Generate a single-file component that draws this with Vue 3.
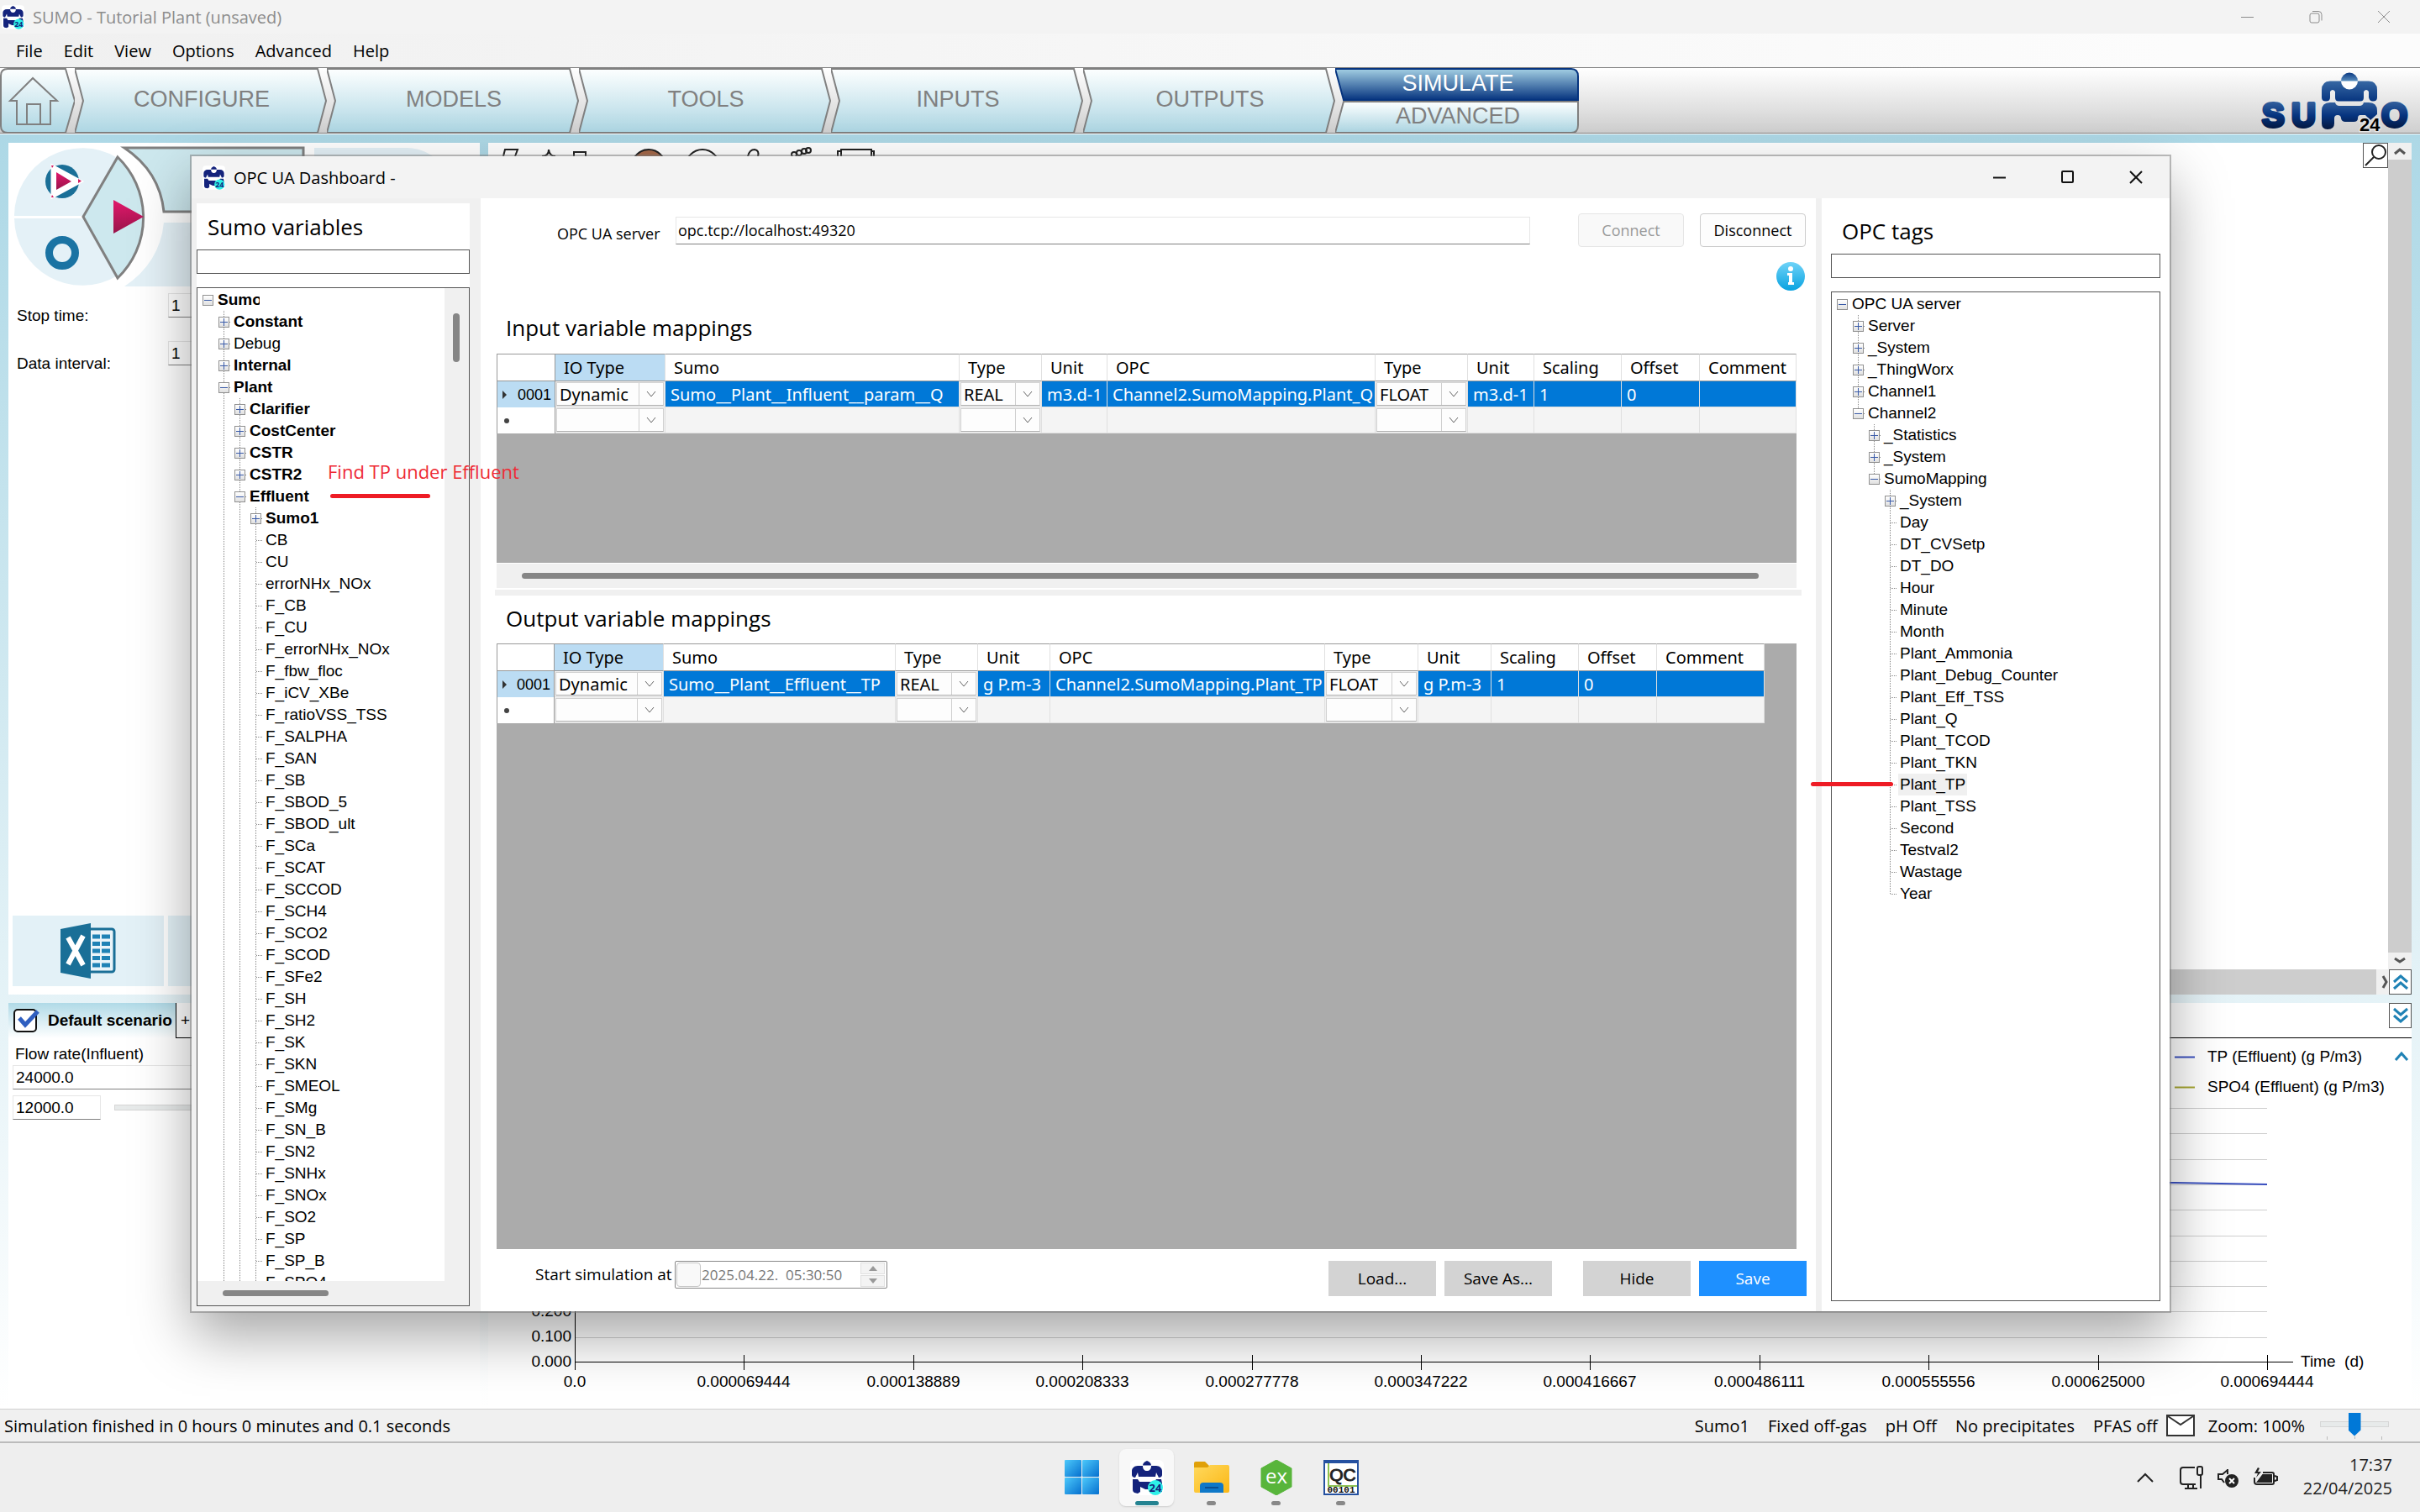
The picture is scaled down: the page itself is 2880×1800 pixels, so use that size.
<script setup>
const menu = ['File', 'Edit', 'View', 'Options', 'Advanced', 'Help']
const steps = ['CONFIGURE', 'MODELS', 'TOOLS', 'INPUTS', 'OUTPUTS']

// level, label, expander, bold
const sumoNodes = [
  [0, 'Sumo', '-', true],
  [1, 'Constant', '+', true],
  [1, 'Debug', '+', false],
  [1, 'Internal', '+', true],
  [1, 'Plant', '-', true],
  [2, 'Clarifier', '+', true],
  [2, 'CostCenter', '+', true],
  [2, 'CSTR', '+', true],
  [2, 'CSTR2', '+', true],
  [2, 'Effluent', '-', true],
  [3, 'Sumo1', '+', true],
  ...[
    'CB', 'CU', 'errorNHx_NOx', 'F_CB', 'F_CU', 'F_errorNHx_NOx', 'F_fbw_floc', 'F_iCV_XBe',
    'F_ratioVSS_TSS', 'F_SALPHA', 'F_SAN', 'F_SB', 'F_SBOD_5', 'F_SBOD_ult', 'F_SCa', 'F_SCAT',
    'F_SCCOD', 'F_SCH4', 'F_SCO2', 'F_SCOD', 'F_SFe2', 'F_SH', 'F_SH2', 'F_SK', 'F_SKN',
    'F_SMEOL', 'F_SMg', 'F_SN_B', 'F_SN2', 'F_SNHx', 'F_SNOx', 'F_SO2', 'F_SP', 'F_SP_B', 'F_SPO4',
  ].map((label) => [3, label, '', false]),
]
const opcNodes = [
  [0, 'OPC UA server', '-'],
  [1, 'Server', '+'],
  [1, '_System', '+'],
  [1, '_ThingWorx', '+'],
  [1, 'Channel1', '+'],
  [1, 'Channel2', '-'],
  [2, '_Statistics', '+'],
  [2, '_System', '+'],
  [2, 'SumoMapping', '-'],
  [3, '_System', '+'],
  ...[
    'Day', 'DT_CVSetp', 'DT_DO', 'Hour', 'Minute', 'Month', 'Plant_Ammonia', 'Plant_Debug_Counter',
    'Plant_Eff_TSS', 'Plant_Q', 'Plant_TCOD', 'Plant_TKN', 'Plant_TP', 'Plant_TSS', 'Second',
    'Testval2', 'Wastage', 'Year',
  ].map((label) => [3, label, '']),
]

// Works out which guide lines run through each row of a tree.
function buildRows(nodes, openEnded) {
  const continues = (index, level) => {
    for (let i = index + 1; i < nodes.length; i++) {
      if (nodes[i][0] === level) return true
      if (nodes[i][0] < level) return false
    }
    return openEnded
  }
  return nodes.map(([level, label, expander, bold], index) => {
    const guides = []
    for (let l = 0; l < level; l++) guides.push(l > 0 && continues(index, l))
    return { level, label, expander, bold: !!bold, guides, last: !continues(index, level) }
  })
}
const sumoRows = buildRows(sumoNodes, true)
const opcRows = buildRows(opcNodes, false)

const heads = ['IO Type', 'Sumo', 'Type', 'Unit', 'OPC', 'Type', 'Unit', 'Scaling', 'Offset', 'Comment']
const isCombo = (c) => c === 0 || c === 2 || c === 5
const grids = {
  input: {
    widths: [70, 131, 350, 98, 78, 319, 110, 79, 104, 93, 115],
    row: ['Dynamic', 'Sumo__Plant__Influent__param__Q', 'REAL', 'm3.d-1', 'Channel2.SumoMapping.Plant_Q', 'FLOAT', 'm3.d-1', '1', '0', ''],
  },
  output: {
    widths: [69, 130, 276, 98, 86, 327, 111, 87, 104, 93, 128],
    row: ['Dynamic', 'Sumo__Plant__Effluent__TP', 'REAL', 'g P.m-3', 'Channel2.SumoMapping.Plant_TP', 'FLOAT', 'g P.m-3', '1', '0', ''],
  },
}
const total = (list) => list.reduce((a, b) => a + b, 0)

const xLabels = ['0.0', '0.000069444', '0.000138889', '0.000208333', '0.000277778', '0.000347222', '0.000416667', '0.000486111', '0.000555556', '0.000625000', '0.000694444']
const tickX = (i) => Math.round(103 + i * 201.4)
const lineY = (i) => Math.round(386 - i * 30.3)
const status = ['Sumo1', 'Fixed off-gas', 'pH Off', 'No precipitates', 'PFAS off']
</script>

<template>
  <div class="desktop">
    <svg class="defs" aria-hidden="true">
      <defs>
        <linearGradient id="ice" x1="0" y1="0" x2="0" y2="1">
          <stop offset="0" stop-color="#fdffff" />
          <stop offset="1" stop-color="#add6e3" />
        </linearGradient>
        <linearGradient id="deep" x1="0" y1="0" x2="0" y2="1">
          <stop offset="0" stop-color="#a3cfe3" />
          <stop offset="1" stop-color="#06347f" />
        </linearGradient>
        <linearGradient id="torso" gradientUnits="userSpaceOnUse" x1="0" y1="10" x2="0" y2="36">
          <stop offset="0" stop-color="#3a6ba6" />
          <stop offset="1" stop-color="#06347f" />
        </linearGradient>
        <linearGradient id="head" gradientUnits="userSpaceOnUse" x1="0" y1="1" x2="0" y2="12">
          <stop offset="0" stop-color="#06347f" />
          <stop offset="1" stop-color="#5d92c0" />
        </linearGradient>
        <linearGradient id="letters" gradientUnits="userSpaceOnUse" x1="0" y1="36" x2="0" y2="69">
          <stop offset="0" stop-color="#33609d" />
          <stop offset="0.5" stop-color="#06347f" />
          <stop offset="1" stop-color="#03163d" />
        </linearGradient>
        <linearGradient id="pink" x1="0" y1="0" x2="0" y2="1">
          <stop offset="0" stop-color="#e2186b" />
          <stop offset="1" stop-color="#98144a" />
        </linearGradient>
        <linearGradient id="info" x1="0" y1="0" x2="0" y2="1">
          <stop offset="0" stop-color="#6fd3f8" />
          <stop offset="1" stop-color="#08a2e0" />
        </linearGradient>
        <linearGradient id="win" x1="0" y1="0" x2="1" y2="1">
          <stop offset="0" stop-color="#4cc9fb" />
          <stop offset="1" stop-color="#0670cf" />
        </linearGradient>
        <linearGradient id="folder" x1="0" y1="0" x2="1" y2="1">
          <stop offset="0" stop-color="#ffd95e" />
          <stop offset="1" stop-color="#fbb714" />
        </linearGradient>
        <symbol id="sumo-app" viewBox="0 0 40 42">
          <rect width="40" height="42" rx="6" fill="#fff" />
          <path d="M20 1c3 1 5 3 5 5.500h-10c0-2.500 2-4.500 5-5.500z" fill="#14237c" />
          <path d="M9 7h6c0 4 2 6 5 6s5-2 5-6h6c4 0 7 3 7 6v5c0 2-2 3-4 3l-3-6-1 5H10l-1-5-3 6c-2 0-4-1-4-3v-5c0-3 3-6 7-6z" fill="#14237c" />
          <path d="M3 23h6l2 3h18l2-3h6l1 5v10l-8 2V31l-4 4h-8l-6-3v6l-3 2-4-1c-2-1-2-3-2-5z" fill="#14237c" />
          <circle cx="30" cy="33" r="9" fill="#2df0e8" />
          <text x="30" y="38" text-anchor="middle" font-size="13" font-weight="700" font-family="Open Sans, sans-serif" fill="#14237c">24</text>
        </symbol>
      </defs>
    </svg>

    <header class="titlebar">
      <svg class="app-icon"><use href="#sumo-app" /></svg>
      <span class="title">SUMO - Tutorial Plant (unsaved)</span>
      <div class="win-buttons muted">
        <button aria-label="Minimize"><svg width="16" height="16"><path d="M0 8.500H15" /></svg></button>
        <button aria-label="Restore"><svg width="16" height="16"><rect x="1" y="4" width="11" height="11" rx="2" /><path d="M4 1.500h7q4 0 4 4v7" /></svg></button>
        <button aria-label="Close"><svg width="16" height="16"><path d="M1 1L15 15M15 1L1 15" /></svg></button>
      </div>
    </header>

    <nav class="menubar">
      <button v-for="m in menu" :key="m">{{ m }}</button>
    </nav>

    <nav class="steps">
      <button class="home" aria-label="Home">
        <svg width="89" height="78" viewBox="0 0 89 78">
          <path d="M9 1H78L89 39L78 77H9Q1 77 1 69V9Q1 1 9 1Z" fill="url(#ice)" stroke="#808080" stroke-width="2" />
          <path d="M39 12L12 39H20V67H60V39H68ZM32 67V43H48V67" fill="none" stroke="#808080" stroke-width="2" />
        </svg>
      </button>
      <button v-for="s in steps" :key="s" class="step">
        <svg width="300" height="78" viewBox="0 0 300 78"><path d="M0 1H289L299 39L289 77H0L10 39Z" fill="url(#ice)" stroke="#808080" stroke-width="2" /></svg>
        <span>{{ s }}</span>
      </button>
      <div class="pair">
        <button class="step active">
          <svg width="290" height="39" viewBox="0 0 290 39"><path d="M0 1H281Q289 1 289 10V38H10Z" fill="url(#deep)" stroke="#06347f" stroke-width="2" /></svg>
          <span>SIMULATE</span>
        </button>
        <button class="step">
          <svg width="290" height="39" viewBox="0 0 290 39"><path d="M10 1H289V29Q289 38 281 38H0Z" fill="url(#ice)" stroke="#808080" stroke-width="2" /></svg>
          <span>ADVANCED</span>
        </button>
      </div>
      <svg class="logo" width="180" height="78" viewBox="0 -4 180 78" role="img" aria-label="SUMO 24">
        <g font-family="Liberation Sans, sans-serif" font-weight="700" font-size="40" fill="url(#letters)" stroke="url(#letters)" stroke-width="4" stroke-linejoin="round">
          <text x="3" y="66">S</text>
          <text x="38" y="66">U</text>
          <text x="145" y="66">O</text>
        </g>
        <circle cx="107" cy="11.500" r="10" fill="#fff" />
        <path d="M97 11.500A10 10 0 0 1 117 11.500Z" fill="url(#head)" />
        <path d="M84 11.500H97A10 10 0 0 0 117 11.500H130Q140 12 140 22V31Q140 35.500 135 35.500Q131 35.500 130 31V24Q127 20 124 24V31Q124 35.500 120 35.500H94Q90 35.500 90 31V24Q87 20 84 24V31Q84 35.500 79 35.500Q74 35.500 74 31V22Q74 12 84 11.500Z" fill="url(#torso)" />
        <path d="M84 37H90Q91 41 95 41H119Q123 41 124 37H130Q140 37 140 47V51L132 58L126 52H120Q117 52 117 56Q117 60 112 60H102Q98 60 97 56Q97 52 93 52Q89 52 89 56V62Q89 69 81 69Q74 69 74 62V47Q74 37 84 37Z" fill="url(#letters)" />
        <text x="119" y="71" font-family="Liberation Sans, sans-serif" font-weight="700" font-size="22" fill="#000" stroke="#e4e4e4" stroke-width="3" paint-order="stroke">24</text>
      </svg>
    </nav>

    <main class="workspace">
      <section class="panel controls">
        <svg class="wheel" width="561" height="179" viewBox="10 170 561 179">
          <path d="M17 257A81 81 0 0 1 140 188L98 257Z" fill="#e4f1f7" />
          <path d="M17 260A81 81 0 0 0 140 328L98 260Z" fill="#e4f1f7" />
          <path d="M99 258L140 187A100 100 0 0 1 140 331Z" fill="#cde8ee" stroke="#808080" stroke-width="3" />
          <path d="M148 176H361V252H195Q190 204 148 176Z" fill="#cde8ee" stroke="#808080" stroke-width="3" />
          <path d="M195 265H361V341H148Q190 313 195 265Z" fill="#e4f1f7" />
          <path d="M374 176H484Q510 176 530 200H374Z" fill="#e4f1f7" />
          <circle cx="74" cy="216" r="20" fill="#1a6f97" />
          <path d="M62 197L97 216L62 235Z" fill="#fff" stroke="#fff" stroke-width="3" />
          <path d="M67 205L85 216L67 226Z" fill="url(#pink)" />
          <path d="M61 197l3 0-2 3zM61 235l3 0-2-3zM93 213l4 2.500-4 2.500z" fill="#d3185f" />
          <circle cx="74" cy="301" r="15.500" fill="none" stroke="#1a73a3" stroke-width="9" />
          <path d="M135 238L171 258L135 278Z" fill="url(#pink)" />
        </svg>
        <div class="field"><label for="stop">Stop time:</label><input id="stop" class="flat" value="1"></div>
        <div class="field"><label for="interval">Data interval:</label><input id="interval" class="flat" value="1"></div>
        <div class="exports">
          <button aria-label="Export to Excel">
            <svg width="66" height="66" viewBox="0 0 66 66">
              <rect x="32" y="7" width="32" height="51" rx="3" fill="#eaf4f9" stroke="#1a6f97" stroke-width="3" />
              <g fill="#1f82b5">
                <template v-for="r in 5" :key="r">
                  <rect x="38" :y="5 + r * 8.500" width="9" height="5" />
                  <rect x="49" :y="5 + r * 8.500" width="10" height="5" />
                </template>
              </g>
              <path d="M0 7L36 0V66L0 59Z" fill="#1a6f97" />
              <path d="M9 17L27 50M27 15L9 49" stroke="#fff" stroke-width="6" />
            </svg>
          </button>
          <button aria-label="Report"></button>
        </div>
      </section>

      <section class="panel drawing">
        <svg class="palette" width="470" height="20" viewBox="580 170 470 20" fill="none" stroke="#222" stroke-width="2">
          <path d="M598 186l2-8h15l-3 8M644 186q8 0 8-8q1 8 8 8M682 186v-5h14v5" />
          <circle cx="771" cy="198" r="20" fill="#a5694a" />
          <circle cx="835" cy="198" r="20" />
          <path d="M889 186q2-8 8-8q6 1 4 8" />
          <circle cx="944" cy="184" r="3" /><circle cx="950" cy="182" r="3" /><circle cx="956" cy="180" r="3" /><circle cx="961" cy="179" r="3" />
          <path d="M1000 190v-12h36v12M1000 180h-4v8M1036 180h3v8" />
        </svg>
        <button class="lens" aria-label="Search">
          <svg width="28" height="28" viewBox="0 0 28 28" fill="none" stroke="#222" stroke-width="2"><circle cx="18" cy="10" r="8" /><path d="M12 16L2 26" /></svg>
        </button>
        <div class="vscroll">
          <button aria-label="Scroll up"><svg width="16" height="10"><path d="M2 8L8 3L14 8" /></svg></button>
          <i></i>
          <button aria-label="Scroll down"><svg width="16" height="10"><path d="M2 2L8 6L14 2" /></svg></button>
        </div>
        <div class="hscroll">
          <i></i>
          <button aria-label="Scroll right"><svg width="9" height="18"><path d="M2 2L6 9L2 16" /></svg></button>
          <button class="fold" aria-label="Collapse up"><svg width="20" height="20"><path d="M2 10L10 3L18 10M2 18L10 11L18 18" /></svg></button>
        </div>
      </section>

      <section class="panel scenario">
        <div class="tabs">
          <div class="tab">
            <svg width="32" height="30" viewBox="0 0 32 30" fill="none">
              <rect x="1" y="2" width="26" height="26" rx="4" fill="#fff" stroke="#111" stroke-width="2" />
              <path d="M7 12L14 20L29 4" stroke="#2f5fc0" stroke-width="5" />
            </svg>
            <b>Default scenario</b>
          </div>
          <button class="add">+</button>
        </div>
        <div class="flow">
          <label for="flow">Flow rate(Influent)</label>
          <input id="flow" class="flat wide" value="24000.0">
          <div class="flow-row"><input class="flat" aria-label="Minimum" value="12000.0"><i class="track"></i></div>
        </div>
      </section>

      <section class="panel results">
        <div class="results-head">
          <button class="fold" aria-label="Collapse down"><svg width="20" height="20"><path d="M2 2L10 9L18 2M2 10L10 17L18 10" /></svg></button>
        </div>
        <svg class="chart" viewBox="0 0 2289 441" font-family="Liberation Sans, sans-serif" font-size="19">
          <g stroke="#cfcfcf" stroke-width="1">
            <path v-for="i in 10" :key="i" :d="`M103 ${lineY(i)}.5H2117`" />
          </g>
          <path d="M103 165L2007 172L2117 174" stroke="#3a50c0" stroke-width="2" fill="none" />
          <path d="M103.500 60V395M103 385.500H2148" stroke="#000" stroke-width="1" />
          <path v-for="(l, i) in xLabels" :key="l" :d="`M${tickX(i)}.5 377V395`" stroke="#000" />
          <text v-for="(l, i) in xLabels" :key="l" :x="tickX(i)" y="415" text-anchor="middle">{{ l }}</text>
          <text x="99" y="331" text-anchor="end">0.200</text>
          <text x="99" y="361" text-anchor="end">0.100</text>
          <text x="99" y="391" text-anchor="end">0.000</text>
          <text x="2157" y="391">Time&nbsp; (d)</text>
          <path d="M2007 22.500H2031" stroke="#3a50c0" stroke-width="2" />
          <path d="M2007 58.500H2031" stroke="#a8a832" stroke-width="2" />
          <text x="2046" y="28">TP (Effluent) (g P/m3)</text>
          <text x="2046" y="64">SPO4 (Effluent) (g P/m3)</text>
          <path d="M2270 26L2277 18L2284 26" stroke="#1f82b5" stroke-width="3" fill="none" />
        </svg>
      </section>
    </main>

    <footer class="statusbar">
      <span class="message">Simulation finished in 0 hours 0 minutes and 0.1 seconds</span>
      <span v-for="s in status" :key="s" class="item">{{ s }}</span>
      <svg class="mail" width="34" height="26" viewBox="0 0 34 26" fill="#fff" stroke="#333" stroke-width="2"><rect x="1" y="1" width="32" height="24" /><path d="M2 2L17 12L32 2" /></svg>
      <label for="zoom" class="zoom">Zoom: 100%</label>
      <div class="zoom-slider">
        <input id="zoom" type="range" min="0" max="200" value="100">
        <svg width="82" height="4"><path d="M8.500 0V4M41.500 0V3M73.500 0V4" stroke="#bbb" /></svg>
      </div>
    </footer>

    <footer class="taskbar">
      <div class="apps">
        <button aria-label="Start"><svg width="42" height="42"><g fill="url(#win)"><rect width="20" height="20" rx="1" /><rect x="21" width="20" height="20" rx="1" /><rect y="21" width="20" height="20" rx="1" /><rect x="21" y="21" width="20" height="20" rx="1" /></g></svg></button>
        <button class="current" aria-label="Sumo"><svg width="40" height="42"><use href="#sumo-app" /></svg><i></i></button>
        <button aria-label="Files">
          <svg width="42" height="42"><path d="M0 4Q0 2 2 2H13L18 7V12H0Z" fill="#e0a008" /><path d="M0 9H16L19 6H40Q42 6 42 8V37Q42 39 40 39H2Q0 39 0 37Z" fill="url(#folder)" /><path d="M7 39V31Q7 27 11 27H31Q35 27 35 31V39Z" fill="#0f78c8" /><path d="M13 33H29" stroke="#0a4f92" stroke-width="2" /></svg><i></i>
        </button>
        <button aria-label="Explorer">
          <svg width="42" height="42"><path d="M21 0L39 10V32L21 42L3 32V10Z" fill="#58b53b" stroke="#58b53b" stroke-linejoin="round" /><text x="21" y="28" text-anchor="middle" font-size="24" font-family="Open Sans, sans-serif" fill="#fff">ex</text></svg><i></i>
        </button>
        <button aria-label="Quick client">
          <svg width="42" height="42"><rect x="1" y="1" width="40" height="40" fill="#fff" stroke="#2551a0" stroke-width="2" /><rect width="42" height="4" fill="#2551a0" /><path d="M6 4V31H40" fill="none" stroke="#8cc152" stroke-width="2" /><text x="23" y="25" text-anchor="middle" font-size="21" font-family="Liberation Sans, sans-serif" fill="#222" stroke="#222">QC</text><text x="21" y="39" text-anchor="middle" font-size="11" font-weight="700" font-family="Liberation Mono, monospace" fill="#111">00101</text></svg><i></i>
        </button>
      </div>
      <div class="tray">
        <svg class="caret" width="20" height="12" fill="none" stroke="#222" stroke-width="2"><path d="M1 11L10 2L19 11" /></svg>
        <svg width="30" height="30" viewBox="0 0 30 30" fill="none" stroke="#222" stroke-width="2"><path d="M19 3H5Q2 3 2 6V20Q2 23 5 23H20M11 23V28M17 23V28M7 28H22M26 12V28" /><rect x="22" y="2" width="6" height="10" rx="2" /></svg>
        <svg width="28" height="26" viewBox="0 0 28 26" fill="none" stroke="#222" stroke-width="2"><path d="M13 4L7 9H2V15H6L9 19M13 3V9" /><circle cx="18" cy="17" r="7" fill="#222" /><path d="M15 14L21 20M21 14L15 20" stroke="#fff" /></svg>
        <svg width="30" height="24" viewBox="0 0 30 24" fill="none" stroke="#222" stroke-width="2"><path d="M12 6H23Q25 6 25 8V18Q25 20 23 20H5Q2 20 2 17V12M26 10L29 11V15L26 16" /><path d="M12 9H22V17H6Z" fill="#222" /><path d="M6 0L2 7H6L4 12L10 5H6L8 1Z" fill="#222" stroke="none" /></svg>
      </div>
      <div class="clock"><span>17:37</span><span>22/04/2025</span></div>
    </footer>

    <div class="dialog" role="dialog" aria-label="OPC UA Dashboard">
      <header class="dialog-title">
        <svg class="app-icon"><use href="#sumo-app" /></svg>
        <span>OPC UA Dashboard -</span>
        <div class="win-buttons">
          <button aria-label="Minimize"><svg width="16" height="16"><path d="M0 8.500H15" /></svg></button>
          <button aria-label="Maximize"><svg width="16" height="16"><rect x="1" y="1" width="13" height="13" rx="1" /></svg></button>
          <button aria-label="Close"><svg width="16" height="16"><path d="M1 1L15 15M15 1L1 15" /></svg></button>
        </div>
      </header>

      <div class="dialog-body">
        <section class="pane sumo-pane">
          <h2><label for="sumo-search">Sumo variables</label></h2>
          <input id="sumo-search" class="search">
          <div class="tree-box">
            <div class="tree-view">
              <ul class="tree">
                <li v-for="(n, i) in sumoRows" :key="i">
                  <span v-for="(g, k) in n.guides" :key="k" class="slot" :class="{ line: g }"></span>
                  <span class="slot own" :class="{ line: n.level > 0 }"><button v-if="n.expander" :class="{ plus: n.expander === '+' }" :aria-label="'Toggle ' + n.label"></button></span>
                  <span class="label" :class="{ bold: n.bold, cut: n.level === 0 }">{{ n.label }}</span>
                </li>
              </ul>
              <div class="bar-v"><i></i></div>
            </div>
            <div class="bar-h"><i></i></div>
          </div>
        </section>

        <section class="center">
          <div class="server">
            <label for="server">OPC UA server</label>
            <input id="server" class="flat" value="opc.tcp://localhost:49320">
            <button class="connect" disabled>Connect</button>
            <button>Disconnect</button>
          </div>
          <button class="info" aria-label="Information">
            <svg width="34" height="34"><circle cx="17" cy="17" r="17" fill="url(#info)" /><circle cx="17" cy="8" r="3" fill="#fff" /><path d="M13 13H19V24H21V27H14V24H15V16H13Z" fill="#fff" /></svg>
          </button>

          <template v-for="(grid, name) in grids" :key="name">
            <h2 :class="name + '-head'">{{ name === 'input' ? 'Input' : 'Output' }} variable mappings</h2>
            <div class="grid" :class="name">
              <table :style="{ width: total(grid.widths) + 'px' }">
                <colgroup><col v-for="(w, i) in grid.widths" :key="i" :style="{ width: w + 'px' }"></colgroup>
                <thead>
                  <tr><th class="corner"></th><th v-for="(h, i) in heads" :key="i" :class="{ picked: i === 0 }">{{ h }}</th></tr>
                </thead>
                <tbody>
                  <tr class="selected">
                    <th class="mark"><div><svg width="7" height="12"><path d="M1 1L6 6L1 11Z" fill="#333" /></svg>0001</div></th>
                    <td v-for="(v, c) in grid.row" :key="c" :class="{ combo: isCombo(c) }">
                      <div v-if="isCombo(c)" class="drop"><select :aria-label="heads[c]"><option>{{ v }}</option></select><svg width="12" height="8"><path d="M1 1L6 7L11 1" /></svg></div>
                      <template v-else>{{ v }}</template>
                    </td>
                  </tr>
                  <tr>
                    <th class="mark"><div><svg width="16" height="6"><circle cx="6" cy="3" r="3" fill="#444" /></svg></div></th>
                    <td v-for="(v, c) in grid.row" :key="c" :class="{ combo: isCombo(c) }">
                      <div v-if="isCombo(c)" class="drop"><select :aria-label="heads[c]"><option></option></select><svg width="12" height="8"><path d="M1 1L6 7L11 1" /></svg></div>
                    </td>
                  </tr>
                </tbody>
              </table>
            </div>
            <template v-if="name === 'input'">
              <div class="grid-scroll"><i></i></div>
              <div class="split"></div>
            </template>
          </template>

          <div class="actions">
            <label for="start">Start simulation at</label>
            <div class="picker">
              <input type="checkbox" aria-label="Use start time" disabled>
              <input id="start" type="text" value="2025.04.22.  05:30:50" disabled>
              <div class="spin">
                <button disabled aria-label="Up"><svg width="10" height="6"><path d="M0 6L5 0L10 6Z" /></svg></button>
                <button disabled aria-label="Down"><svg width="10" height="6"><path d="M0 0L5 6L10 0Z" /></svg></button>
              </div>
            </div>
            <div class="files"><button>Load...</button><button>Save As...</button></div>
            <div class="close"><button>Hide</button><button class="primary">Save</button></div>
          </div>
        </section>

        <section class="pane opc-pane">
          <h2><label for="opc-search">OPC tags</label></h2>
          <input id="opc-search" class="search">
          <div class="tree-box">
            <ul class="tree">
              <li v-for="(n, i) in opcRows" :key="i">
                <span v-for="(g, k) in n.guides" :key="k" class="slot" :class="{ line: g }"></span>
                <span class="slot own" :class="{ line: n.level > 0, last: n.last }"><button v-if="n.expander" :class="{ plus: n.expander === '+' }" :aria-label="'Toggle ' + n.label"></button></span>
                <span class="label" :class="{ hit: n.label === 'Plant_TP' }">{{ n.label }}</span>
              </li>
            </ul>
          </div>
        </section>
      </div>

      <div class="note">Find TP under Effluent</div>
      <div class="stroke under"></div>
      <div class="stroke pointer"></div>
    </div>
  </div>
</template>

<style>
body {
  margin: 0;
}
</style>

<style scoped>
* {
  box-sizing: border-box;
}
.desktop {
  position: relative;
  display: flex;
  flex-direction: column;
  min-height: 100vh;
  overflow: hidden;
  font-family: "Open Sans", sans-serif;
  font-size: 20px;
  color: #000;
  background: #eee;
}
.defs {
  position: absolute;
  width: 0;
  height: 0;
}
button,
input,
select {
  margin: 0;
  padding: 0;
  border: 0;
  border-radius: 0;
  background: none;
  font: inherit;
  color: inherit;
}
svg {
  display: block;
}
h2 {
  margin: 0;
  font-size: 26px;
  font-weight: 400;
}

/* Main window chrome */
.titlebar {
  display: flex;
  align-items: center;
  height: 40px;
  padding: 0 3px 0 2px;
  background: #f3f3f3;
  color: #8c8c8c;
}
.app-icon {
  width: 27px;
  height: 29px;
  margin-right: 10px;
}
.win-buttons {
  display: flex;
  align-self: stretch;
  margin-left: auto;
}
.win-buttons button {
  display: flex;
  align-items: center;
  justify-content: center;
  width: 81px;
}
.win-buttons svg {
  fill: none;
  stroke: #111;
  stroke-width: 2;
}
.win-buttons.muted svg {
  stroke: #8c8c8c;
  stroke-width: 1;
}
.menubar {
  display: flex;
  gap: 25px;
  height: 40px;
  padding: 1px 0 0 19px;
  background: linear-gradient(90deg, #f0f0f0, #fcfcfc 90%);
}
.steps {
  display: flex;
  height: 79px;
  border-top: 1px solid #808080;
  border-bottom: 1px solid #808080;
  background: linear-gradient(#fff, #cfcfcf);
}
.steps svg {
  grid-area: 1 / 1;
}
.step {
  display: grid;
  place-items: center;
  width: 300px;
  font-family: "Liberation Sans", sans-serif;
  font-size: 27px;
  line-height: 30px;
  color: #808080;
}
.step span {
  grid-area: 1 / 1;
  padding: 0 0 4px 2px;
}
.pair .step {
  width: 290px;
  height: 39px;
}
.step.active {
  color: #fff;
}
.logo {
  margin: 0 11px 0 auto;
}

/* Workspace */
.workspace {
  flex: 1;
  display: grid;
  grid-template-columns: 561px 1fr;
  grid-template-rows: 1014fr 483fr;
  gap: 10px;
  padding: 10px 10px 0;
  border-top: 1px solid #fff;
  background: linear-gradient(#add8e6, #fff);
  font-family: "Liberation Sans", sans-serif;
  font-size: 19px;
}
.panel {
  min-width: 0;
  background: #fff;
}
.flat {
  height: 29px;
  padding: 0 3px;
  border: 1px solid #e6e6e6;
  border-bottom-color: #808080;
  background: #fff;
}
.controls {
  display: flex;
  flex-direction: column;
}
.field {
  display: flex;
  align-items: flex-end;
  height: 37px;
  margin-bottom: 20px;
  padding-left: 10px;
}
.field label {
  width: 180px;
  line-height: 20px;
}
.field input {
  align-self: flex-start;
}
.exports {
  display: flex;
  gap: 5px;
  margin: auto 5px 10px;
}
.exports button {
  display: flex;
  align-items: center;
  justify-content: center;
  width: 180px;
  height: 84px;
  background: #e3f1f7;
}
.drawing {
  display: grid;
  grid-template-columns: 1fr auto 28px;
  grid-template-rows: 1fr 30px;
}
.lens {
  width: 30px;
  height: 30px;
  border: 1px solid #555;
}
.vscroll {
  display: flex;
  flex-direction: column;
  background: #f0f0f0;
}
.vscroll button {
  display: flex;
  align-items: center;
  justify-content: center;
  height: 20px;
}
.vscroll i,
.hscroll i {
  flex: 1;
  background: #cdcdcd;
}
.vscroll svg,
.hscroll svg {
  fill: none;
  stroke: #555;
  stroke-width: 3;
}
.hscroll {
  grid-column: 1 / -1;
  display: flex;
  background: #f0f0f0;
}
.hscroll button {
  width: 15px;
  padding-left: 6px;
}
.hscroll .fold,
.fold {
  display: flex;
  align-items: center;
  justify-content: center;
  width: 27px;
  height: 30px;
  padding: 0;
  border: 1px solid #555;
  background: #fff;
}
.drawing .fold svg,
.fold svg {
  fill: none;
  stroke: #1f82b5;
  stroke-width: 3;
}
.tabs {
  display: flex;
  height: 42px;
}
.tab {
  display: flex;
  align-items: center;
  gap: 9px;
  width: 199px;
  padding-left: 6px;
  background: linear-gradient(#b0dae7, #fff);
  white-space: nowrap;
}
.add {
  flex: 1;
  padding-left: 5px;
  border-left: 1px solid #000;
  border-bottom: 1px solid #000;
  text-align: left;
}
.flow {
  display: flex;
  flex-direction: column;
  gap: 7px;
  padding: 8px 5px;
}
.flow label {
  height: 17px;
  padding-left: 3px;
  line-height: 22px;
}
.flow-row {
  display: flex;
  align-items: center;
  gap: 16px;
}
.flow-row .flat {
  width: 105px;
}
.track {
  flex: 1;
  height: 7px;
  border: 1px solid #d6d6d6;
  background: #e7eaea;
}
.results-head {
  display: flex;
  justify-content: flex-end;
  height: 42px;
  border-bottom: 1px solid #000;
}
.chart {
  width: 100%;
}

/* Status bar and taskbar */
.statusbar {
  display: flex;
  align-items: center;
  height: 41px;
  padding: 0 37px 0 5px;
  border-top: 1px solid #d0d0d0;
  border-bottom: 2px solid #bbb;
  background: #f0f0f0;
}
.message {
  margin-right: auto;
}
.item {
  margin-left: 22px;
}
.mail {
  margin: 0 16px 0 10px;
}
.zoom {
  margin-right: 18px;
}
.zoom-slider {
  width: 82px;
}
.zoom-slider input {
  display: block;
  width: 82px;
  height: 30px;
  appearance: none;
}
.zoom-slider input::-webkit-slider-runnable-track {
  height: 7px;
  border: 1px solid #d6d6d6;
  background: #e7eaea;
}
.zoom-slider input::-webkit-slider-thumb {
  width: 15px;
  height: 28px;
  margin-top: -11px;
  appearance: none;
  background: #0078d7;
  clip-path: polygon(0 0, 100% 0, 100% 75%, 50% 100%, 0 75%);
}
.taskbar {
  display: grid;
  grid-template-columns: 1fr auto auto;
  height: 82px;
  padding-right: 33px;
  background: #eee;
}
.apps {
  display: flex;
  align-items: center;
  gap: 12px;
  padding-left: 1255px;
}
.apps button {
  display: grid;
  justify-items: center;
  align-content: end;
  gap: 7px;
  width: 65px;
  height: 68px;
  padding-bottom: 13px;
  border-radius: 8px;
}
.apps button:has(i) {
  padding-bottom: 1px;
}
.apps .current {
  background: #f8f8f8;
  box-shadow: 0 1px 2px #ccc;
}
.apps i {
  width: 11px;
  height: 5px;
  border-radius: 3px;
  background: #888;
}
.apps .current i {
  width: 28px;
  background: #248391;
}
.tray {
  display: flex;
  align-items: center;
  gap: 15px;
  margin-right: 16px;
}
.tray .caret {
  margin-right: 15px;
}
.clock {
  display: flex;
  flex-direction: column;
  justify-content: center;
  width: 120px;
  padding-bottom: 3px;
  text-align: right;
  line-height: 28px;
  color: #222;
}

/* OPC UA dialog */
.dialog {
  position: absolute;
  inset: 186px 298px 239px 228px;
  display: flex;
  flex-direction: column;
  background: #f0f0f0;
  box-shadow: 0 0 0 2px rgba(120, 120, 120, 0.5), 0 28px 64px rgba(0, 0, 0, 0.36);
}
.dialog-title {
  display: flex;
  align-items: center;
  height: 50px;
  padding-left: 13px;
  background: #f3f3f3;
}
.dialog-body {
  flex: 1;
  display: flex;
  min-height: 0;
}
.pane {
  display: flex;
  flex-direction: column;
  min-height: 0;
  background: #fff;
}
.pane h2 {
  padding-left: 13px;
}
.sumo-pane {
  width: 325px;
  margin: 6px 13px 6px 6px;
}
.sumo-pane h2 {
  height: 55px;
  line-height: 56px;
}
.opc-pane {
  width: 414px;
  margin-left: 7px;
  padding: 0 11px 12px;
}
.opc-pane h2 {
  height: 66px;
  line-height: 78px;
}
.search {
  height: 29px;
  margin-bottom: 16px;
  border: 1px solid #555;
  background: #fff;
}
.tree-box {
  flex: 1;
  display: flex;
  flex-direction: column;
  min-height: 0;
  border: 1px solid #555;
  overflow: hidden;
}
.tree-view {
  flex: 1;
  display: flex;
  min-height: 0;
}
.tree {
  flex: 1;
  min-width: 0;
  margin: 0;
  padding: 1px 0 0 6px;
  list-style: none;
  overflow: hidden;
  font-family: "Liberation Sans", sans-serif;
  font-size: 19px;
  line-height: 26px;
}
.tree li {
  display: flex;
  height: 26px;
}
.slot {
  flex: none;
  width: 19px;
  background-repeat: no-repeat;
  background-position: 6px 0;
  background-size: 1px 100%;
}
.slot.line {
  background-image: repeating-linear-gradient(#888 0 1px, transparent 1px 2px);
}
.slot.own {
  display: flex;
  align-items: center;
  width: 16px;
}
.slot.own.line {
  background-image: repeating-linear-gradient(#888 0 1px, transparent 1px 2px), repeating-linear-gradient(90deg, #888 0 1px, transparent 1px 2px);
  background-position: 6px 0, 7px 13px;
  background-size: 1px 100%, 8px 1px;
}
.slot.own.line.last {
  background-size: 1px 50%, 8px 1px;
}
.slot button {
  width: 13px;
  height: 13px;
  border: 1px solid #919191;
  background: linear-gradient(#3a5ba8, #3a5ba8) center / 9px 1px no-repeat, linear-gradient(#fff, #e0e0e0);
}
.slot button.plus {
  background: linear-gradient(#3a5ba8, #3a5ba8) center / 9px 1px no-repeat, linear-gradient(#3a5ba8, #3a5ba8) center / 1px 9px no-repeat, linear-gradient(#fff, #e0e0e0);
}
.label {
  padding: 0 2px;
  overflow: hidden;
  white-space: nowrap;
}
.label.bold {
  font-weight: 700;
}
.label.cut {
  width: 52px;
}
.label.hit {
  background: #f0f0f0;
}
.bar-v {
  width: 29px;
  padding: 30px 10px;
  background: #f0f0f0;
}
.bar-v i {
  display: block;
  width: 8px;
  height: 58px;
  border-radius: 4px;
  background: #868686;
}
.bar-h {
  height: 29px;
  padding: 11px 30px;
  background: #f0f0f0;
}
.bar-h i {
  display: block;
  width: 126px;
  height: 7px;
  border-radius: 4px;
  background: #868686;
}

.center {
  flex: 1;
  display: flex;
  flex-direction: column;
  min-width: 0;
  background: #fff;
}
.server {
  display: flex;
  align-items: center;
  height: 40px;
  margin: 18px 12px 18px 91px;
  font-size: 18px;
}
.server label {
  width: 141px;
  padding-top: 8px;
}
.server .flat {
  flex: 1;
  height: 33px;
  margin-right: 57px;
  padding: 0 2px;
}
.server button {
  width: 126px;
  height: 40px;
  border: 1px solid #ccc;
  border-radius: 4px;
  background: #fdfdfd;
}
.server .connect {
  margin-right: 19px;
  border-color: #e6e6e6;
  background: #f9f9f9;
  color: #999;
}
.info {
  align-self: flex-end;
  margin-right: 13px;
}
.center h2 {
  padding-left: 30px;
}
.input-head {
  height: 75px;
  line-height: 88px;
}
.output-head {
  height: 57px;
  line-height: 54px;
}
.grid {
  margin: 0 23px 0 19px;
  background: #ababab;
  overflow: hidden;
}
.grid.input {
  height: 249px;
}
.grid.output {
  flex: 1;
}
table {
  table-layout: fixed;
  border-collapse: separate;
  border-spacing: 0;
  font-family: "Noto Sans", sans-serif;
  font-size: 20px;
  line-height: 24px;
}
th,
td {
  overflow: hidden;
  padding: 1px 0 0 6px;
  border-right: 1px solid #e0e0e0;
  font-weight: 400;
  text-align: left;
  white-space: nowrap;
}
thead th {
  height: 33px;
  padding: 1px 0 0 10px;
  border-top: 1px solid #999;
  border-bottom: 1px solid #999;
  background: #fff;
}
thead .corner,
.mark {
  border-left: 1px solid #999;
  border-right: 1px solid #999;
}
thead .picked,
.selected .mark {
  background: #bbdcf3;
}
tbody tr {
  height: 31px;
}
td {
  border-bottom: 1px solid #e0e0e0;
  background: #f4f4f4;
}
.mark {
  padding: 0 4px 0 5px;
  background: #fff;
  font-family: "Liberation Sans", sans-serif;
  font-size: 18px;
}
.mark div {
  display: flex;
  align-items: center;
  justify-content: space-between;
}
.selected td {
  background: #0078d7;
  color: #fff;
}
td.combo {
  padding: 1px;
  background: #f0f0f0;
  color: #000;
}
.drop {
  display: grid;
  grid-template-columns: 1fr 29px;
  align-items: center;
  height: 28px;
  border: 1px solid #d0d0d0;
  border-bottom-color: #b0b0b0;
  background: linear-gradient(#d0d0d0, #d0d0d0) right 28px top / 1px 100% no-repeat #fdfdfd;
}
.drop select {
  grid-area: 1 / 1 / 2 / 3;
  height: 26px;
  padding: 1px 0 0 3px;
  appearance: none;
}
.drop svg {
  grid-area: 1 / 2;
  justify-self: center;
  fill: none;
  stroke: #666;
  pointer-events: none;
}
.grid-scroll {
  height: 29px;
  margin: 1px 23px 2px 19px;
  padding: 11px 45px 0 30px;
  background: #f0f0f0;
}
.grid-scroll i {
  display: block;
  height: 7px;
  border-radius: 4px;
  background: #868686;
}
.split {
  height: 7px;
  margin: 0 17px;
  background: #f0f0f0;
}
.actions {
  display: flex;
  height: 74px;
  padding: 14px 11px 0 65px;
  font-size: 19px;
}
.actions > label {
  width: 166px;
  line-height: 32px;
}
.picker {
  display: flex;
  align-items: center;
  width: 253px;
  height: 33px;
  padding: 0 2px 0 1px;
  border: 1px solid #888;
  border-radius: 2px;
  font-size: 17px;
  color: #777;
}
.picker input[type="checkbox"] {
  width: 29px;
  height: 29px;
  appearance: none;
  border: 1px solid #c6c6c6;
  border-radius: 4px;
  background: #f9f9f9;
}
.picker input[type="text"] {
  flex: 1;
  min-width: 0;
  padding-left: 1px;
  white-space: pre;
}
.spin {
  display: grid;
  gap: 1px;
  width: 29px;
}
.spin button {
  display: flex;
  align-items: center;
  justify-content: center;
  height: 14px;
  border: 1px solid #e0e0e0;
  background: #f3f3f3;
}
.spin svg {
  fill: #999;
}
.files,
.close {
  display: flex;
  gap: 10px;
}
.files {
  margin: 0 37px 0 auto;
}
.files button,
.close button {
  width: 128px;
  height: 42px;
  background: #d3d3d3;
}
.close .primary {
  background: #1e90ff;
  color: #fff;
}

/* Red annotations over the dialog */
.note {
  position: absolute;
  top: 360px;
  left: 162px;
  font-size: 22px;
  line-height: 30px;
  color: #ee2b35;
}
.stroke {
  position: absolute;
  height: 5px;
  border-radius: 3px;
  background: #ee1c25;
}
.under {
  top: 402px;
  left: 165px;
  width: 119px;
}
.pointer {
  top: 745px;
  right: 329px;
  width: 98px;
}
</style>
